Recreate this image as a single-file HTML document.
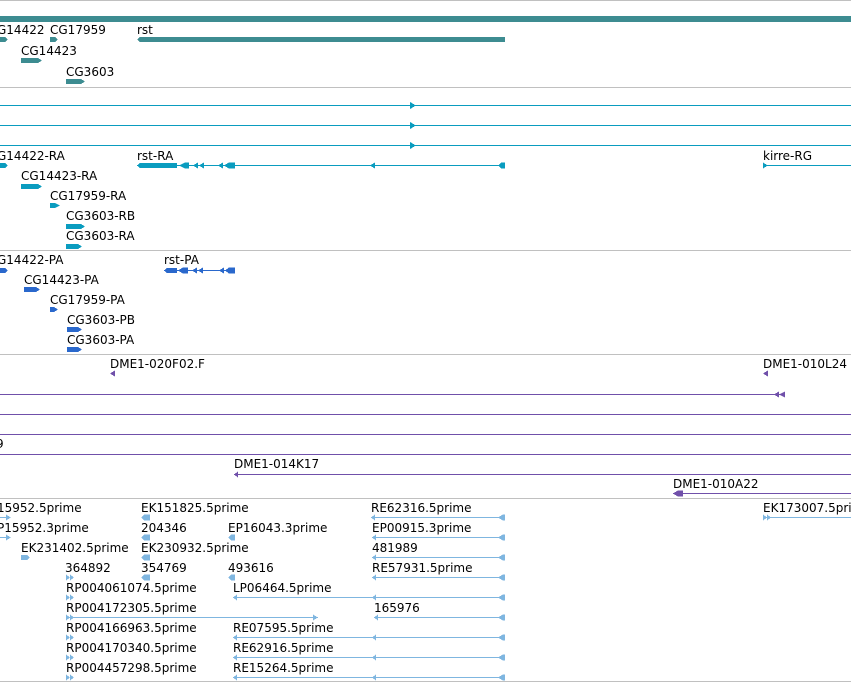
<!DOCTYPE html>
<html><head><meta charset="utf-8"><style>
html,body{margin:0;padding:0;background:#fff;width:851px;height:683px;overflow:hidden}
svg{display:block}
text{font-family:"DejaVu Sans","Liberation Sans",sans-serif;font-size:12px;fill:#000}
</style></head><body>
<svg width="851" height="683" viewBox="0 0 851 683" xmlns="http://www.w3.org/2000/svg" shape-rendering="crispEdges">
<!-- separators -->
<g fill="#c0c0c0">
<rect x="0" y="0" width="851" height="1"/>
<rect x="0" y="87" width="851" height="1"/>
<rect x="0" y="250" width="851" height="1"/>
<rect x="0" y="354" width="851" height="1"/>
<rect x="0" y="498" width="851" height="1"/>
<rect x="0" y="681" width="851" height="1"/>
</g>
<!-- Section 1 teal -->
<g fill="#3d8c91">
<rect x="0" y="16" width="851" height="6"/>
<polygon points="0,37 5,37 8,39.5 5,42 0,42"/>
<polygon points="50,37 55,37 58,39.5 55,42 50,42"/>
<polygon points="137,39.5 140,37 505,37 505,42 140,42"/>
<polygon points="21,58 38,58 42,60.5 38,63 21,63"/>
<polygon points="66,79 81,79 85,81.5 81,84 66,84"/>
</g>
<text x="-3" y="34">G14422</text><text x="50" y="34">CG17959</text><text x="137" y="34">rst</text>
<text x="21" y="55">CG14423</text><text x="66" y="76">CG3603</text>
<!-- Section 2 cyan -->
<g fill="#0a9cbf">
<rect x="0" y="105" width="851" height="1"/>
<rect x="0" y="125" width="851" height="1"/>
<rect x="0" y="145" width="851" height="1"/>
<polygon points="410,102 416,105.5 410,109"/>
<polygon points="410,122 416,125.5 410,129"/>
<polygon points="410,142 416,145.5 410,149"/>
<rect x="137" y="165" width="368" height="1"/>
<polygon points="137,165.5 140,163 177,163 177,168 140,168"/>
<polygon points="179,165.5 185,162.5 189,162.5 189,168.5 185,168.5"/>
<polygon points="193,165.5 198,162.5 198,168.5"/><polygon points="199,165.5 204,162.5 204,168.5"/>
<polygon points="218,165.5 223,162.5 223,168.5"/><polygon points="224,165.5 229,162.5 235,162.5 235,168.5 229,168.5"/>
<polygon points="370,165.5 375,162.5 375,168.5"/>
<polygon points="498,165.5 501,162.5 505,162.5 505,168.5 501,168.5"/>
<rect x="763" y="165" width="88" height="1"/>
<polygon points="763,162.5 768,165.5 763,168.5"/>
<polygon points="0,163 5,163 8,165.5 5,168 0,168"/>
<polygon points="21,184 38,184 42,186.5 38,189 21,189"/>
<polygon points="50,203 55,203 60,205.5 55,208 50,208"/>
<polygon points="66,224 81,224 85,226.5 81,229 66,229"/>
<polygon points="66,244 78,244 82,246.5 78,249 66,249"/>
</g>
<text x="-3" y="160">G14422-RA</text><text x="137" y="160">rst-RA</text><text x="763" y="160">kirre-RG</text>
<text x="21" y="180">CG14423-RA</text><text x="50" y="200">CG17959-RA</text>
<text x="66" y="220">CG3603-RB</text><text x="66" y="240">CG3603-RA</text>
<!-- Section 3 blue -->
<g fill="#2a68cc">
<polygon points="0,268 5,268 8,270.5 5,273 0,273"/>
<rect x="164" y="270" width="71" height="1"/>
<polygon points="164,270.5 167,268 177,268 177,273 167,273"/>
<polygon points="178,270.5 183,267.5 188,267.5 188,273.5 183,273.5"/>
<polygon points="192,270.5 197,267.5 197,273.5"/><polygon points="198,270.5 203,267.5 203,273.5"/>
<polygon points="219,270.5 224,267.5 224,273.5"/><polygon points="225,270.5 229,267.5 235,267.5 235,273.5 229,273.5"/>
<polygon points="24,287 36,287 40,289.5 36,292 24,292"/>
<polygon points="50,307 54,307 58,309.5 54,312 50,312"/>
<polygon points="67,327 78,327 82,329.5 78,332 67,332"/>
<polygon points="67,347 78,347 82,349.5 78,352 67,352"/>
</g>
<text x="-3" y="264">G14422-PA</text><text x="164" y="264">rst-PA</text>
<text x="24" y="284">CG14423-PA</text><text x="50" y="304">CG17959-PA</text>
<text x="67" y="324">CG3603-PB</text><text x="67" y="344">CG3603-PA</text>
<!-- Section 4 purple -->
<g fill="#7050aa">
<polygon points="110,373.5 115,370.5 115,376.5"/>
<polygon points="763,373.5 768,370.5 768,376.5"/>
<rect x="0" y="394" width="785" height="1"/>
<polygon points="774,394.5 779,391.5 779,397.5"/><polygon points="779,394.5 785,391.5 785,397.5"/>
<rect x="0" y="414" width="851" height="1"/>
<rect x="0" y="434" width="851" height="1"/>
<rect x="0" y="454" width="851" height="1"/>
<rect x="234" y="474" width="617" height="1"/>
<polygon points="234,474.5 238,471.5 238,477.5"/>
<rect x="673" y="493" width="178" height="1"/>
<polygon points="673,493.5 678,490.5 683,490.5 683,496.5 678,496.5"/>
</g>
<text x="110" y="368">DME1-020F02.F</text><text x="763" y="368">DME1-010L24</text>
<text x="-4" y="448">9</text><text x="234" y="468">DME1-014K17</text><text x="673" y="488">DME1-010A22</text>
<!-- Section 5 light blue -->
<g fill="#7fb6e0">
<!-- row1 y517 -->
<rect x="0" y="517" width="10" height="1"/><polygon points="6,514.5 11,517.5 6,520.5"/>
<polygon points="141,517.5 144,514.5 150,514.5 150,520.5 144,520.5"/>
<rect x="371" y="517" width="134" height="1"/><polygon points="371,517.5 375,514.5 375,520.5"/><polygon points="498,517.5 503,514.5 505,514.5 505,520.5 503,520.5"/>
<rect x="763" y="517" width="88" height="1"/><polygon points="763,514.5 767,517.5 763,520.5"/><polygon points="767,514.5 771,517.5 767,520.5"/>
<!-- row2 537 -->
<rect x="0" y="537" width="10" height="1"/><polygon points="6,534.5 11,537.5 6,540.5"/>
<polygon points="141,537.5 144,534.5 150,534.5 150,540.5 144,540.5"/>
<polygon points="228,537.5 231,534.5 235,534.5 235,540.5 231,540.5"/>
<rect x="372" y="537" width="133" height="1"/><polygon points="372,537.5 376,534.5 376,540.5"/><polygon points="498,537.5 503,534.5 505,534.5 505,540.5 503,540.5"/>
<!-- row3 557 -->
<polygon points="21,555 27,555 30,557.5 27,560 21,560"/>
<polygon points="141,557.5 144,554.5 150,554.5 150,560.5 144,560.5"/>
<rect x="372" y="557" width="133" height="1"/><polygon points="372,557.5 376,554.5 376,560.5"/><polygon points="498,557.5 503,554.5 505,554.5 505,560.5 503,560.5"/>
<!-- row4 577 -->
<polygon points="66,574.5 70,577.5 66,580.5"/><polygon points="70,574.5 74,577.5 70,580.5"/>
<polygon points="141,577.5 144,574.5 150,574.5 150,580.5 144,580.5"/>
<polygon points="228,577.5 231,574.5 235,574.5 235,580.5 231,580.5"/>
<rect x="372" y="577" width="133" height="1"/><polygon points="372,577.5 376,574.5 376,580.5"/><polygon points="498,577.5 503,574.5 505,574.5 505,580.5 503,580.5"/>
<!-- rows 5-9 left -->
<polygon points="66,594.5 70,597.5 66,600.5"/><polygon points="70,594.5 74,597.5 70,600.5"/>
<rect x="66" y="617" width="252" height="1"/><polygon points="66,614.5 70,617.5 66,620.5"/><polygon points="70,614.5 74,617.5 70,620.5"/><polygon points="313,614.5 318,617.5 313,620.5"/>
<polygon points="66,634.5 70,637.5 66,640.5"/><polygon points="70,634.5 74,637.5 70,640.5"/>
<polygon points="66,654.5 70,657.5 66,660.5"/><polygon points="70,654.5 74,657.5 70,660.5"/>
<polygon points="66,674.5 70,677.5 66,680.5"/><polygon points="70,674.5 74,677.5 70,680.5"/>
<!-- rows 5-9 right -->
<rect x="233" y="597" width="272" height="1"/><polygon points="233,597.5 237,594.5 237,600.5"/><polygon points="372,597.5 376,594.5 376,600.5"/><polygon points="498,597.5 503,594.5 505,594.5 505,600.5 503,600.5"/>
<rect x="374" y="617" width="131" height="1"/><polygon points="374,617.5 378,614.5 378,620.5"/><polygon points="498,617.5 503,614.5 505,614.5 505,620.5 503,620.5"/>
<rect x="233" y="637" width="272" height="1"/><polygon points="233,637.5 237,634.5 237,640.5"/><polygon points="372,637.5 376,634.5 376,640.5"/><polygon points="498,637.5 503,634.5 505,634.5 505,640.5 503,640.5"/>
<rect x="233" y="657" width="272" height="1"/><polygon points="233,657.5 237,654.5 237,660.5"/><polygon points="372,657.5 376,654.5 376,660.5"/><polygon points="498,657.5 503,654.5 505,654.5 505,660.5 503,660.5"/>
<rect x="233" y="677" width="272" height="1"/><polygon points="233,677.5 237,674.5 237,680.5"/><polygon points="372,677.5 376,674.5 376,680.5"/><polygon points="498,677.5 503,674.5 505,674.5 505,680.5 503,680.5"/>
</g>
<text x="-3" y="512">15952.5prime</text><text x="141" y="512">EK151825.5prime</text><text x="371" y="512">RE62316.5prime</text><text x="763" y="512">EK173007.5prime</text>
<text x="-3" y="532">P15952.3prime</text><text x="141" y="532">204346</text><text x="228" y="532">EP16043.3prime</text><text x="372" y="532">EP00915.3prime</text>
<text x="21" y="552">EK231402.5prime</text><text x="141" y="552">EK230932.5prime</text><text x="372" y="552">481989</text>
<text x="65" y="572">364892</text><text x="141" y="572">354769</text><text x="228" y="572">493616</text><text x="372" y="572">RE57931.5prime</text>
<text x="66" y="592">RP004061074.5prime</text><text x="233" y="592">LP06464.5prime</text>
<text x="66" y="612">RP004172305.5prime</text><text x="374" y="612">165976</text>
<text x="66" y="632">RP004166963.5prime</text><text x="233" y="632">RE07595.5prime</text>
<text x="66" y="652">RP004170340.5prime</text><text x="233" y="652">RE62916.5prime</text>
<text x="66" y="672">RP004457298.5prime</text><text x="233" y="672">RE15264.5prime</text>
</svg>
</body></html>
